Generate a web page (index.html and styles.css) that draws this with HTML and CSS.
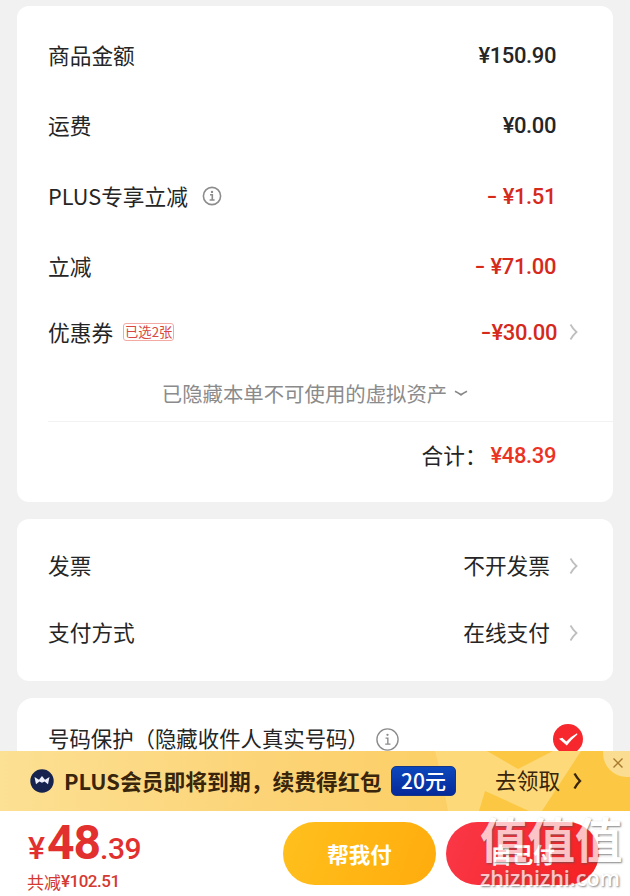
FILE: index.html
```html
<!doctype html>
<html lang="zh-CN">
<head>
    <meta charset="utf-8">
    <meta name="viewport" content="width=device-width, initial-scale=1">
    <link rel="stylesheet" href="styles.css">
    <title>确认订单</title>
</head>
<body>
<main class="page">
    <section class="card amounts">
        <div class="row">
            <span>商品金额</span>
            <span class="price">¥150.90</span>
        </div>
        <div class="row">
            <span>运费</span>
            <span class="price">¥0.00</span>
        </div>
        <div class="row">
            <span>PLUS专享立减</span>
            <svg class="info" viewBox="0 0 20 20"><circle cx="10" cy="10" r="8.6"/><path d="M8 8.8h2.3v5M7.6 14h5"/><circle class="dot" cx="10" cy="5.9" r="1.2"/></svg>
            <span class="price red"><span class="minus spaced">-</span>¥1.51</span>
        </div>
        <div class="row">
            <span>立减</span>
            <span class="price red"><span class="minus spaced">-</span>¥71.00</span>
        </div>
        <div class="row coupon">
            <span>优惠券</span>
            <span class="tag">已选2张</span>
            <span class="price red"><span class="minus">-</span>¥30.00</span>
            <svg class="arrow" viewBox="0 0 10 18"><path d="M1.5 1.5Q4 6 7.5 9Q4 12 1.5 16.5"/></svg>
        </div>
        <div class="note">
            <span>已隐藏本单不可使用的虚拟资产</span>
            <svg class="down" viewBox="0 0 14 7"><path d="M1 1.2Q4 2.6 7 4.8Q10 2.6 13 1.2"/></svg>
        </div>
        <div class="total">
            <span>合计：</span>
            <span class="price bright">¥48.39</span>
        </div>
    </section>

    <section class="card options">
        <div class="row">
            <span>发票</span>
            <span class="value">不开发票</span>
            <svg class="arrow" viewBox="0 0 10 18"><path d="M1.5 1.5Q4 6 7.5 9Q4 12 1.5 16.5"/></svg>
        </div>
        <div class="row">
            <span>支付方式</span>
            <span class="value">在线支付</span>
            <svg class="arrow" viewBox="0 0 10 18"><path d="M1.5 1.5Q4 6 7.5 9Q4 12 1.5 16.5"/></svg>
        </div>
    </section>

    <section class="card privacy">
        <span class="privacy-text">号码保护（隐藏收件人真实号码）</span>
        <svg class="info large" viewBox="0 0 20 20"><circle cx="10" cy="10" r="9.2"/><path d="M8.3 8.8h2v5M8 14h4.6"/><circle class="dot" cx="10" cy="5.9" r="1"/></svg>
        <svg class="check" viewBox="0 0 30 30"><circle cx="15" cy="15" r="15"/><path d="M6 14.8L9.3 13.8L13.3 17.5Q17.5 12.7 24 9.3L24.4 10.6Q18.6 15.5 13.8 21.5Z"/></svg>
    </section>
</main>

<aside class="banner">
    <svg class="banner-art" viewBox="0 0 195 60" preserveAspectRatio="none">
        <path class="light" d="M0 0H151L107 60H13Q8 30 0 0Z"/>
        <path class="deep" d="M50 40L94 60H44Z"/>
        <path class="deep" d="M52 0H118L83 18Z"/>
        <path class="deep" d="M146 0H195V60H107Z"/>
    </svg>
    <svg class="crown" viewBox="0 0 24 24"><circle cx="12" cy="12" r="11.7"/><path d="M4.5 8L9 10.7L12 7L15 10.7L19.5 8L18 15.2L14.6 12.4L12 13.8L9.4 12.4L6 15.2Z"/></svg>
    <span class="banner-text">PLUS会员即将到期，续费得红包</span>
    <span class="bonus">20元</span>
    <span class="claim">去领取</span>
    <svg class="claim-arrow" viewBox="0 0 9 18"><path d="M1.5 1.5Q4 6 7 9Q4 12 1.5 16.5"/></svg>
    <span class="close"><svg viewBox="0 0 10 10"><path d="M.5 .5L9.5 9.5M9.5 .5L.5 9.5"/></svg></span>
</aside>

<footer class="paybar">
    <div class="sum">
        <div class="sum-price"><span class="yen">¥</span><span class="whole">48</span><span class="cents">.39</span></div>
        <div class="saved">共减<span>¥102.51</span></div>
    </div>
    <button class="btn help">帮我付</button>
    <button class="btn self">自己付</button>
    <div class="watermark">
        <div class="mark-name">值值值</div>
        <div class="mark-site">zhizhizhi.com</div>
    </div>
</footer>
</body>
</html>
```

FILE: styles.css
```css
* {
    box-sizing: border-box;
}

body {
    margin: 0;
    width: 630px;
    height: 896px;
    overflow: hidden;
    display: flex;
    flex-direction: column;
    background-color: #f1f1f1;
    color: #252525;
    font-family: "Noto Sans CJK SC", sans-serif;
    font-size: 21.7px;
    line-height: 1;
    white-space: nowrap;
}

svg {
    display: block;
    flex: none;
    fill: none;
}

.page {
    height: 751px;
    flex: none;
    overflow: hidden;
    padding: 6px 17px 0;
}

.card {
    background-color: #fff;
    border-radius: 12px;
    margin-bottom: 17px;
    padding-left: 31px;
}

.amounts {
    height: 496px;
    padding-top: 14px;
}

.row {
    display: flex;
    align-items: center;
    height: 70.5px;
    padding-right: 57px;
}

.row > span:first-child {
    padding-bottom: 1px;
}

.price {
    margin-left: auto;
    padding-top: 1px;
    font-family: Roboto, "Noto Sans CJK SC", sans-serif;
    font-size: 22px;
    font-weight: 500;
    letter-spacing: -0.4px;
}

.minus {
    display: inline-block;
    transform: scaleX(1.35);
    transform-origin: left;
    margin-right: 4px;
}

.minus.spaced {
    margin-right: 9px;
}

.red {
    color: #d5291c;
}

.bright {
    color: #ea3323;
}

.info {
    width: 20px;
    height: 20px;
    margin-left: 14px;
    stroke: #8c8c8c;
    stroke-width: 1.6;
}

.info .dot {
    fill: #8c8c8c;
    stroke: none;
}

.arrow {
    width: 10px;
    height: 18px;
    stroke: #bfbfbf;
    stroke-width: 1.8;
}

.coupon {
    height: 60px;
    padding-right: 34px;
}

.coupon > span:first-child {
    padding: 0;
}

.coupon .price {
    padding-top: 1px;
}

.coupon .arrow {
    margin-left: 12px;
}

.tag {
    margin-left: 10px;
    height: 18px;
    padding: 0 1px;
    border: 1px solid #f3aaa4;
    border-radius: 3px;
    color: #d84840;
    font-size: 13.3px;
    line-height: 15px;
}

.note {
    display: flex;
    align-items: center;
    justify-content: center;
    height: 60px;
    padding: 4px 31px 0 0;
    border-bottom: 1px solid #f2f2f2;
    color: #8b8b8b;
    font-size: 20.4px;
}

.down {
    width: 14px;
    height: 7px;
    margin-left: 7px;
    stroke: #888;
    stroke-width: 1.8;
}

.total {
    display: flex;
    align-items: center;
    height: 65px;
    padding-right: 57px;
    justify-content: flex-end;
}

.total .price {
    margin-left: 4px;
    padding-top: 2px;
}

.options {
    height: 162px;
    padding-top: 13px;
}

.options .row {
    height: 67px;
    padding-right: 34px;
}

.value {
    margin-left: auto;
    padding-bottom: 1px;
}

.options .arrow {
    margin-left: 19px;
}

.privacy {
    display: flex;
    align-items: center;
    height: 82px;
    padding-right: 30px;
    border-radius: 16px;
}

.privacy-text {
    padding-bottom: 2px;
    font-size: 21.4px;
}

.info.large {
    width: 23px;
    height: 23px;
    margin-left: 7px;
    stroke-width: 1.2;
}

.check {
    width: 30px;
    height: 30px;
    margin-left: auto;
}

.check circle {
    fill: #f6282d;
}

.check path {
    fill: #fff;
}

.banner {
    position: relative;
    flex: none;
    display: flex;
    align-items: center;
    height: 60px;
    padding-left: 30px;
    background: linear-gradient(90deg, #fce093, #fcd375 45%, #fccb55);
    color: #38250b;
}

.banner-art {
    position: absolute;
    right: 0;
    top: 0;
    width: 195px;
    height: 60px;
}

.light {
    fill: #fdd979;
}

.deep {
    fill: #fcc844;
}

.crown {
    width: 24px;
    height: 24px;
}

.crown circle {
    fill: #16234e;
}

.crown path {
    fill: #eceefa;
}

.banner-text {
    margin-left: 10px;
    width: 320px;
    font-weight: 700;
    font-size: 21.8px;
}

.bonus {
    position: relative;
    width: 65px;
    height: 30px;
    margin-left: 7px;
    border-radius: 5px;
    background: linear-gradient(#0b48bd, #06299a);
    border: 1px solid #173585;
    color: #fff;
    font-size: 21px;
    font-weight: 500;
    line-height: 26px;
    text-align: center;
}

.claim {
    position: relative;
    margin-left: 39px;
    padding-bottom: 3px;
}

.claim-arrow {
    position: relative;
    width: 9px;
    height: 18px;
    margin-left: 13px;
    stroke: #38250b;
    stroke-width: 2.4;
}

.close {
    position: absolute;
    top: 0;
    right: 0;
    width: 27px;
    height: 26px;
    border-bottom-left-radius: 24px;
    background-color: #fbdd92;
}

.close svg {
    width: 10px;
    height: 10px;
    margin: 7px 0 0 10px;
    stroke: #a77a2e;
    stroke-width: 1.4;
}

.paybar {
    position: relative;
    flex: none;
    display: flex;
    height: 85px;
    padding: 11px 0 0 27px;
    background-color: #fff;
}

.sum {
    width: 256px;
    color: #e1302e;
}

.sum-price {
    display: flex;
    align-items: baseline;
    height: 43px;
    font-family: Roboto, sans-serif;
    font-weight: 500;
}

.yen {
    width: 20px;
    padding-left: 1px;
    font-size: 32px;
}

.whole {
    font-size: 48px;
    line-height: 41px;
    font-weight: 700;
    letter-spacing: -1px;
}

.cents {
    font-size: 30px;
    letter-spacing: -0.5px;
}

.saved {
    display: flex;
    align-items: center;
    height: 32px;
    font-size: 17px;
    color: #d43a32;
}

.saved span {
    font-family: Roboto, sans-serif;
    font-weight: 500;
    letter-spacing: -0.5px;
}

.btn {
    width: 153px;
    height: 63px;
    padding: 0 0 1px;
    border: none;
    border-radius: 32px;
    color: #fff;
    font-family: inherit;
    font-size: 21.5px;
    font-weight: 700;
}

.help {
    background: linear-gradient(110deg, #ffc01d, #ffac0d);
}

.self {
    margin-left: 10px;
    background: linear-gradient(110deg, #fa3848, #f52020);
}

.watermark {
    position: absolute;
    left: 480px;
    top: 1px;
    color: #fff;
    opacity: 0.72;
    text-shadow: 1px 1px 2px #555;
}

.mark-name {
    font-size: 47.5px;
    line-height: 52px;
    font-weight: 700;
}

.mark-site {
    font-family: "Open Sans", sans-serif;
    font-size: 21.5px;
    line-height: 28px;
    font-weight: 600;
}
```
